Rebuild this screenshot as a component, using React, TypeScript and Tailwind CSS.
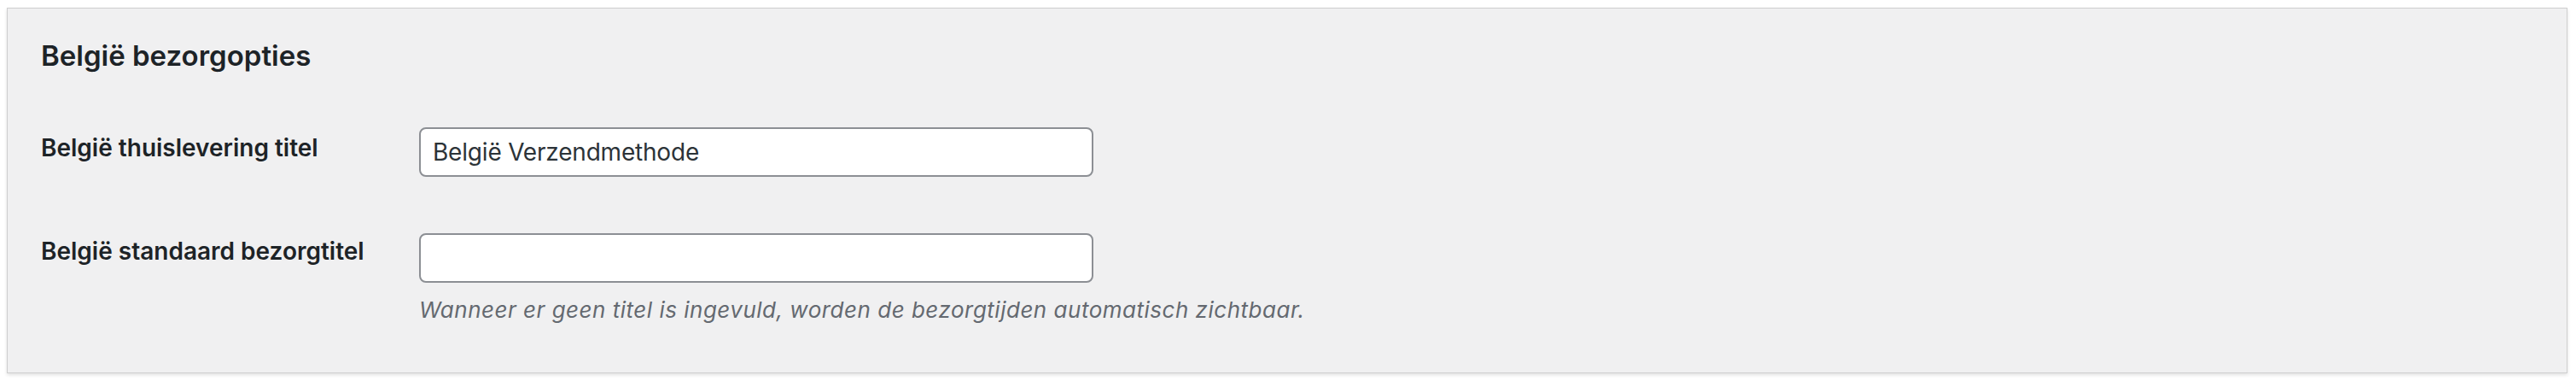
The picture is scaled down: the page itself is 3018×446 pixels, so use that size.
export default function App() {
  const font = { fontFamily: 'Inter, "Noto Sans", sans-serif' };
  return (
    <div className="min-h-[446px] w-[3018px] bg-white pt-[9px]" style={font}>
      <div className="ml-[8px] w-[3000px] border border-[#cfcfcf] bg-[#f0f0f1] pl-[39px] pt-[31px] pb-[55px] shadow-[0_2px_4px_rgba(0,0,0,0.12)]">
        <h2 className="text-[33px] font-semibold leading-[48px] text-[#1d2327]">
          België bezorgopties
        </h2>
        <div className="mt-[60px] flex">
          <div className="w-[443px] pt-[4px] text-[28px] font-semibold leading-[40px] text-[#1d2327]">
            België thuislevering titel
          </div>
          <input
            type="text"
            defaultValue="België Verzendmethode"
            className="h-[58px] w-[790px] rounded-[8px] border-2 border-[#8c8f94] bg-white px-[14px] text-[28px] tracking-[-0.2px] text-[#2c3338] outline-none"
            style={font}
          />
        </div>
        <div className="mt-[66px] flex">
          <div className="w-[443px] pt-[1px] text-[28px] font-semibold leading-[40px] text-[#1d2327]">
            België standaard bezorgtitel
          </div>
          <div className="flex flex-col">
            <input
              type="text"
              defaultValue=""
              className="h-[58px] w-[790px] rounded-[8px] border-2 border-[#8c8f94] bg-white px-[14px] text-[28px] text-[#2c3338] outline-none"
              style={font}
            />
            <p className="mt-[14px] text-[26px] italic leading-[36px] tracking-[0.5px] text-[#646970]">
              Wanneer er geen titel is ingevuld, worden de bezorgtijden automatisch zichtbaar.
            </p>
          </div>
        </div>
      </div>
    </div>
  );
}
